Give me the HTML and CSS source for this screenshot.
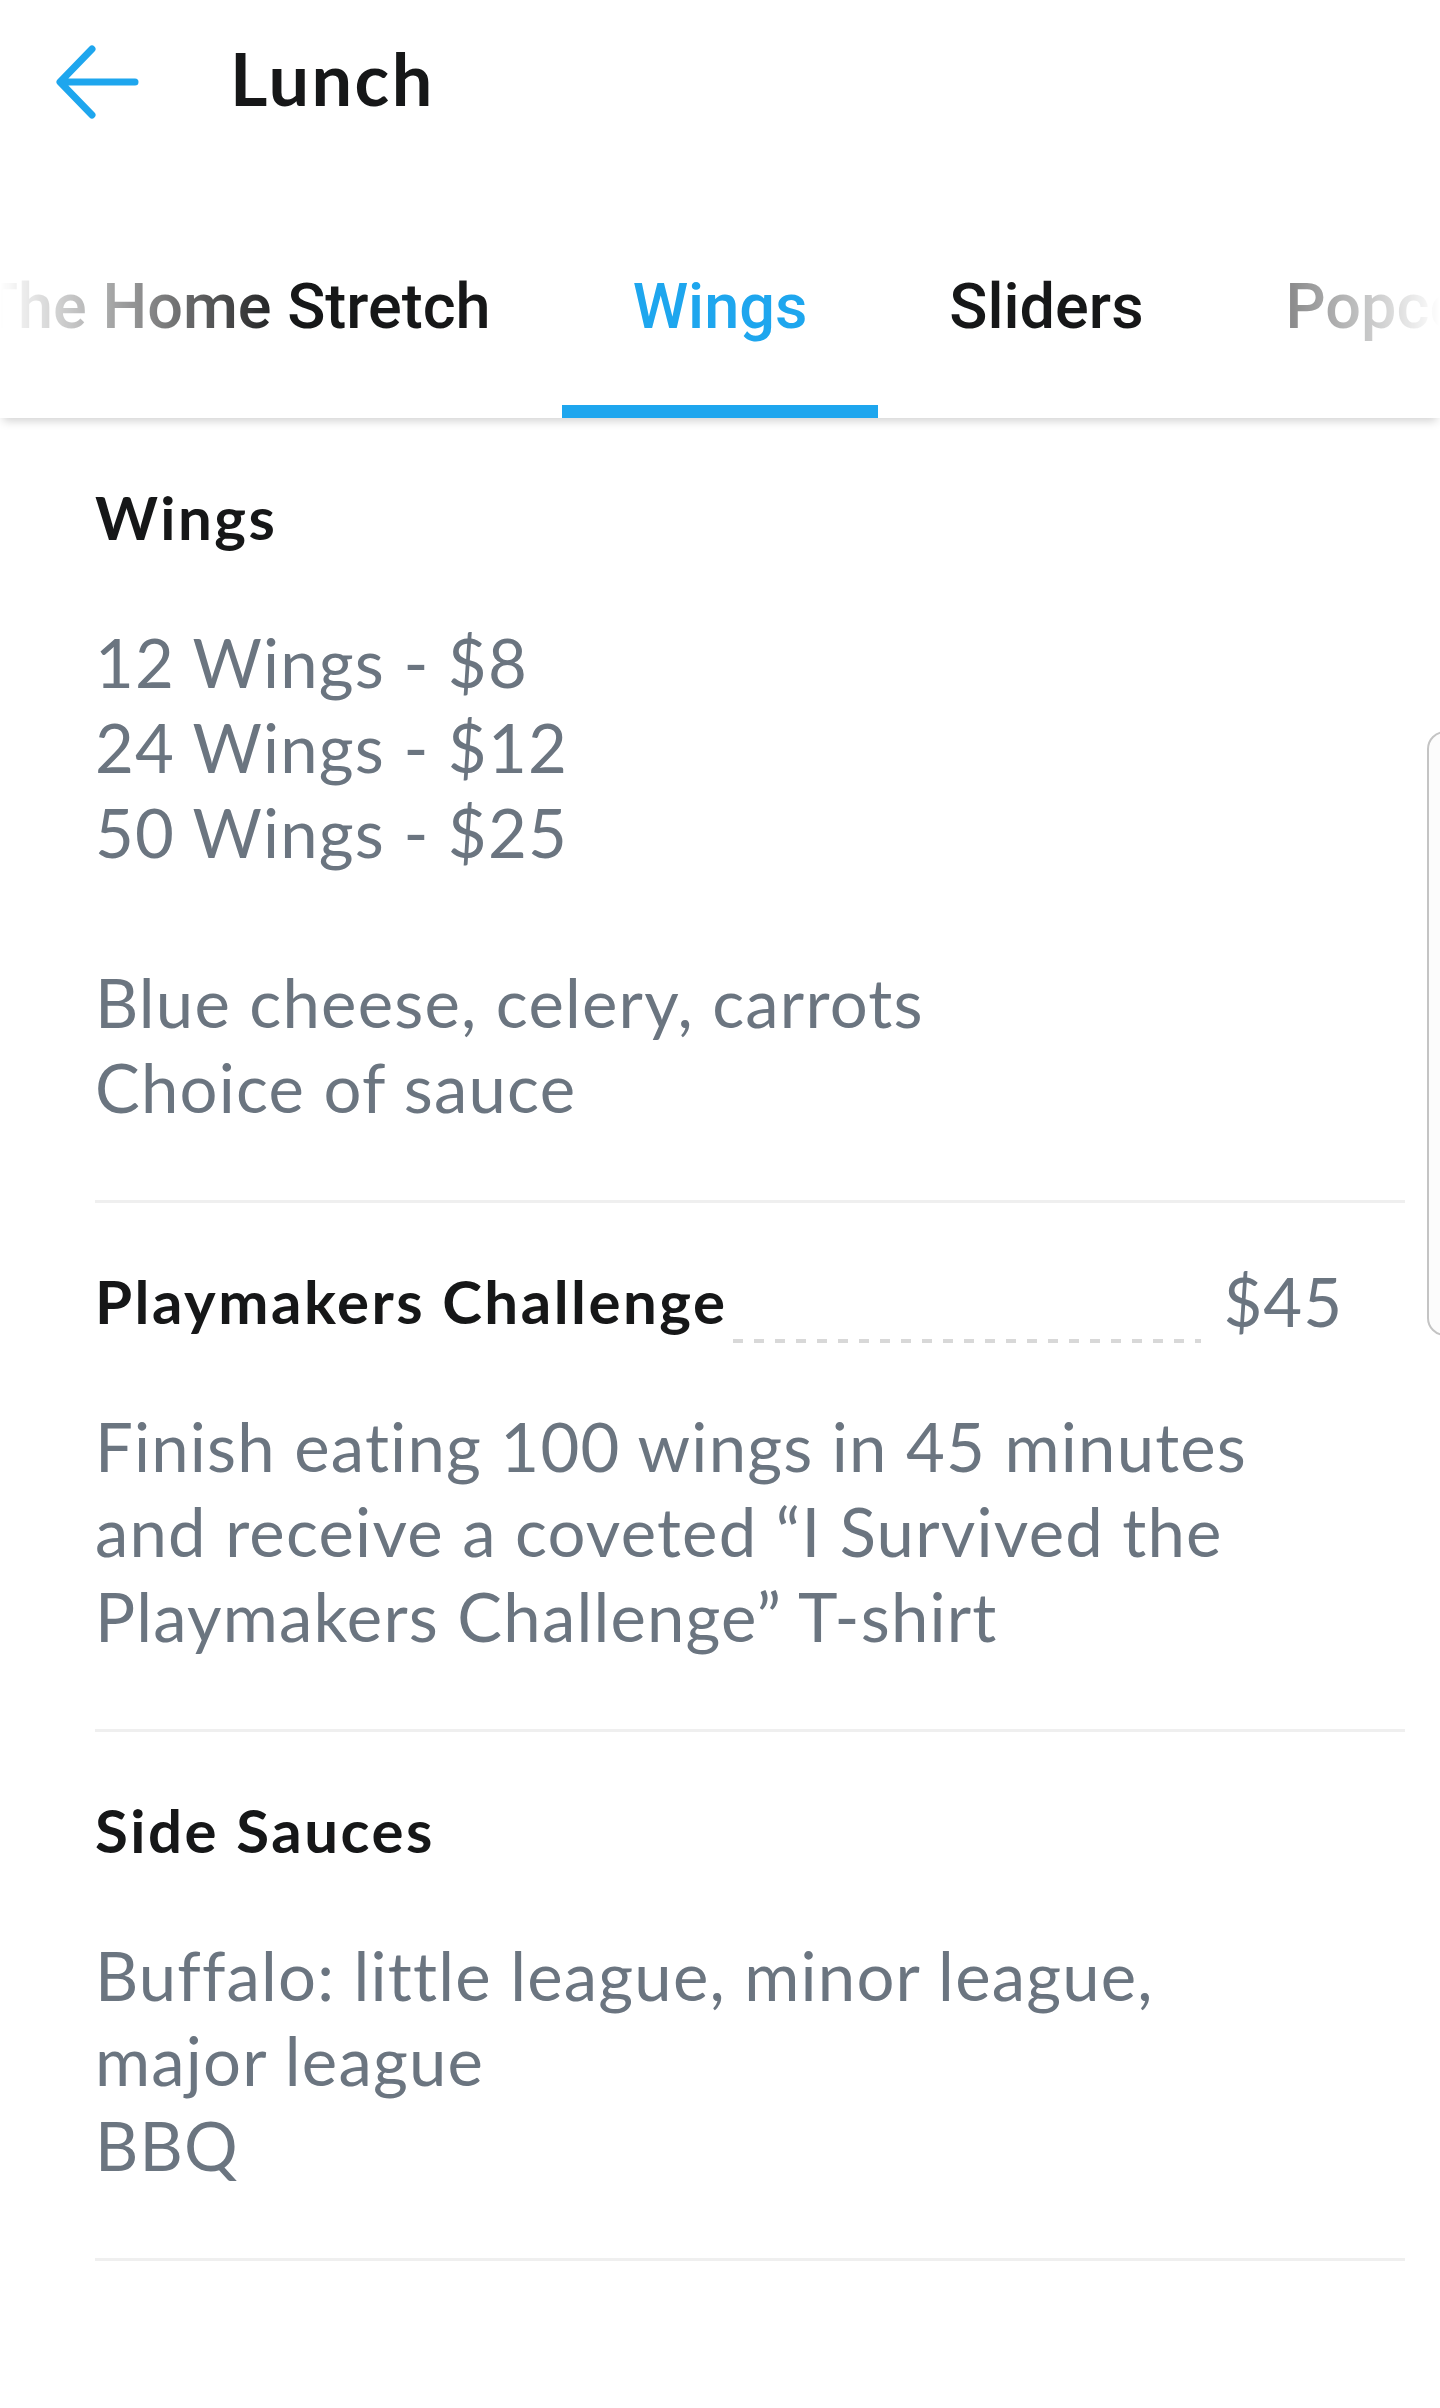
FILE: index.html
```html
<!DOCTYPE html>
<html lang="en">
<head>
<meta charset="utf-8">
<title>Lunch</title>
<link rel="stylesheet" href="styles.css">
</head>
<body>
<div class="app">
  <header class="toolbar">
    <svg class="back" width="90" height="82" viewBox="0 0 90 82" aria-label="Back">
      <path d="M83 41H9M40 8L8 41L40 74" fill="none" stroke="#1ea6ee" stroke-width="7" stroke-linecap="round" stroke-linejoin="round"/>
    </svg>
    <h1 class="title">Lunch</h1>
  </header>

  <nav class="tabbar">
    <div class="tabs">
      <div class="tabs-left">
        <span class="tab">The Home Stretch</span>
      </div>
      <span class="tab tab-active">Wings</span>
      <div class="tabs-right">
        <span class="tab">Sliders</span>
        <span class="tab">Popcorn Chicken</span>
      </div>
    </div>
  </nav>

  <main class="menu">
    <section class="item item-first">
      <div class="item-head">
        <h2 class="item-title">Wings</h2>
      </div>
      <p class="desc">12 Wings - $8<br>24 Wings - $12<br>50 Wings - $25<br><br>Blue cheese, celery, carrots<br>Choice of sauce</p>
    </section>

    <section class="item">
      <div class="item-head">
        <h2 class="item-title">Playmakers Challenge</h2>
        <span class="leader"></span>
        <span class="price">$45</span>
      </div>
      <p class="desc">Finish eating 100 wings in 45 minutes and receive a coveted “I Survived the Playmakers Challenge” T-shirt</p>
    </section>

    <section class="item">
      <div class="item-head">
        <h2 class="item-title">Side Sauces</h2>
      </div>
      <p class="desc">Buffalo: little league, minor league, major league<br>BBQ</p>
    </section>
  </main>

  <div class="edge-handle"></div>
</div>
</body>
</html>
```

FILE: styles.css
```css
* {
  box-sizing: border-box;
}

html, body {
  margin: 0;
  padding: 0;
  background: #ffffff;
}

body {
  font-family: Lato, "Noto Sans", "Liberation Sans", sans-serif;
  color: #161718;
}

.app {
  position: relative;
  width: 1440px;
  min-height: 2408px;
  overflow: hidden;
}

/* ---------- toolbar ---------- */
.toolbar {
  position: relative;
  z-index: 3;
  display: flex;
  align-items: flex-start;
  height: 163px;
  padding-left: 52px;
  background: #ffffff;
}

.back {
  display: block;
  margin-top: 41px;
  flex: none;
}

.title {
  margin: 35px 0 0 88px;
  font-family: Lato, "Noto Sans", sans-serif;
  font-weight: 700;
  font-size: 72px;
  line-height: 86px;
  letter-spacing: 2.5px;
  color: #161718;
}

/* ---------- tabs ---------- */
.tabbar {
  position: relative;
  z-index: 2;
  background: #ffffff;
  box-shadow: 0 6px 9px -3px rgba(0, 0, 0, 0.18);
}

.tabs {
  display: grid;
  grid-template-columns: minmax(0, 1fr) auto minmax(0, 1fr);
  height: 255px;
  -webkit-mask-image: linear-gradient(to right, transparent 0, #000 290px, #000 1140px, transparent 1440px);
  mask-image: linear-gradient(to right, transparent 0, #000 290px, #000 1140px, transparent 1440px);
}

.tabs-left {
  display: flex;
  justify-content: flex-end;
  overflow: hidden;
}

.tabs-right {
  display: flex;
  justify-content: flex-start;
  overflow: hidden;
}

.tab {
  flex: none;
  height: 255px;
  padding: 107px 71px 0;
  border-bottom: 13px solid transparent;
  font-family: Roboto, "Noto Sans", sans-serif;
  font-weight: 500;
  font-size: 63px;
  line-height: 74px;
  color: #161718;
  white-space: nowrap;
}

.tab-active {
  color: #1ea6ee;
  border-bottom-color: #1ea6ee;
}

/* ---------- menu ---------- */
.menu {
  margin: 0 35px 0 95px;
}

.item {
  padding: 62px 0 70px;
  border-bottom: 3px solid #efefef;
}

.item-first {
  padding-top: 63px;
}

.item-head {
  display: flex;
  align-items: flex-start;
}

.item-title {
  margin: 0;
  font-family: Lato, "Noto Sans", sans-serif;
  font-weight: 700;
  font-size: 60px;
  line-height: 72px;
  letter-spacing: 2.5px;
  color: #161718;
  white-space: nowrap;
}

.leader {
  flex: 1;
  align-self: flex-end;
  height: 4px;
  margin: 0 0 -6px 5px;
  background-image: linear-gradient(to right, #d8d8d8 10px, transparent 10px);
  background-size: 21px 4px;
  background-repeat: repeat-x;
}

.price {
  margin: 0 62px 0 22px;
  font-family: Lato, "Noto Sans", sans-serif;
  font-weight: 400;
  font-size: 67px;
  line-height: 72px;
  letter-spacing: 1px;
  color: #6b7580;
}

.desc {
  margin: 67px 0 0;
  padding-right: 90px;
  font-family: Lato, "Noto Sans", sans-serif;
  font-weight: 400;
  font-size: 67px;
  line-height: 85px;
  letter-spacing: 1.2px;
  color: #6b7580;
}

/* ---------- right edge handle (overlay) ---------- */
.edge-handle {
  position: absolute;
  left: 1427px;
  top: 731px;
  width: 40px;
  height: 605px;
  border: 2px solid #c4c4c4;
  border-radius: 18px;
  background: #fcfcfc;
}
```
